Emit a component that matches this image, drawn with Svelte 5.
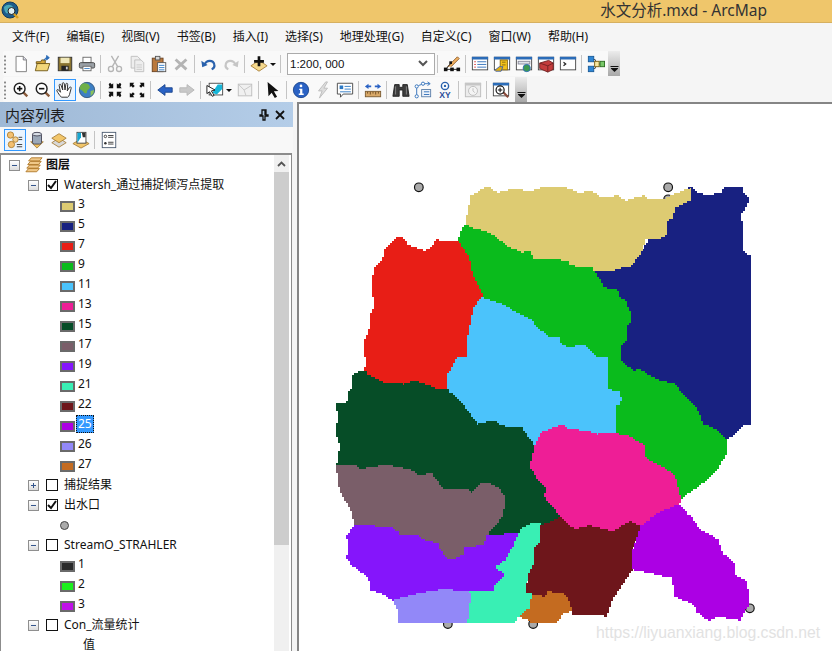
<script>
  const menus = ['文件(F)', '编辑(E)', '视图(V)', '书签(B)', '插入(I)', '选择(S)', '地理处理(G)', '自定义(C)', '窗口(W)', '帮助(H)'];

  const win = (inner) => `<rect x="1.5" y="2.5" width="17" height="14" fill="#fff" stroke="#444"/><rect x="1" y="2" width="18" height="3" fill="#2b6cb8"/>${inner}`;
  const mag = (sign) => `<path d="M12 12l5 5" stroke="#8a5a3a" stroke-width="2.6"/><circle cx="8.5" cy="8.5" r="6" fill="#fff" stroke="#222" stroke-width="1.6"/><path d="${sign}" stroke="#111" stroke-width="1.8"/>`;
  const diamond = (y, fill) => `<path d="M10 ${y}l8 5-8 5-8-5z" fill="${fill}" stroke="#a8803c"/>`;

  const icons = {
    new: '<path d="M4.5 1.5h8l3.5 3.5v13.5H4.5z" fill="#fff" stroke="#777"/><path d="M12.5 1.5v4h3.5" fill="#dde" stroke="#777"/>',
    open: '<path d="M2.5 7.5h5l1-2h4v4h-10z" fill="#d8a93c" stroke="#6b5314"/><path d="M1.5 17.5l2-8h14l-2.500 8z" fill="#f3d77a" stroke="#6b5314"/><path d="M11 6c1-3 3-3 5-3M14 0.500l3 2.500-3 2.500z" fill="#2b6cb8" stroke="#2b6cb8"/>',
    save: '<rect x="2.500" y="2.500" width="15" height="15" fill="#8a7430" stroke="#333"/><rect x="5" y="3" width="10" height="6" fill="#efe7b8"/><rect x="6" y="12" width="8" height="5.500" fill="#222"/><rect x="11" y="13" width="2" height="3" fill="#ccc"/>',
    print: '<rect x="5.500" y="2.500" width="9" height="6" fill="#fff" stroke="#666"/><rect x="1.500" y="8.500" width="17" height="6" rx="1.500" fill="#9aa0a6" stroke="#444"/><rect x="5.500" y="12.500" width="9" height="5" fill="#fff" stroke="#666"/><path d="M7 15h6" stroke="#3b7fc4"/>',
    cut: '<g fill="none" stroke="#b5b5b5" stroke-width="1.500"><path d="M6 1l7 12M14 1L7 13"/><circle cx="5.500" cy="15.500" r="2.800"/><circle cx="14.500" cy="15.500" r="2.800"/></g>',
    copy: '<g fill="#eee" stroke="#bdbdbd"><path d="M3.500 1.500h7l3 3v10h-10z"/><path d="M7.500 5.500h7l3 3v10h-10z"/></g><path d="M9.500 11h6M9.500 13.500h6M9.500 16h6" stroke="#c8c8c8"/>',
    paste: '<rect x="2.500" y="3.500" width="12" height="15" fill="#b9783c" stroke="#6a4322"/><rect x="6" y="1.500" width="5" height="4" fill="#d8d8d8" stroke="#555"/><rect x="8.500" y="8.500" width="9" height="10" fill="#fff" stroke="#555"/><path d="M10 11.500h6M10 14h6M10 16.500h6" stroke="#2b78c4"/>',
    del: '<path d="M4 5l12 11M16 5L4 16" stroke="#b4b4b4" stroke-width="3.200"/>',
    undo: '<path d="M5 11c2-6 10-6 11 0 .4 2-1 4-3 5" fill="none" stroke="#2a62ad" stroke-width="2.400"/><path d="M1.500 6.500l1 7 6-2.500z" fill="#2a62ad"/>',
    redo: '<path d="M15 11c-2-6-10-6-11 0-.4 2 1 4 3 5" fill="none" stroke="#c6c6c6" stroke-width="2.400"/><path d="M18.500 6.500l-1 7-6-2.500z" fill="#c6c6c6"/>',
    add: '<path d="M10 6l9 6-9 6-9-6z" fill="#f4d88c" stroke="#a8803c"/><path d="M10 1.500v11M4.500 7h11" stroke="#111" stroke-width="3"/>',
    editor: '<path d="M5 15L16 4l2 2-9 9" fill="#f0b060" stroke="#8a5a2a" transform="translate(0 -2)"/><path d="M3 16h14M3 16L9 9" stroke="#222"/><g fill="#111"><rect x="1" y="14" width="4" height="4"/><rect x="8" y="14" width="4" height="4"/><rect x="15" y="14" width="4" height="4"/><rect x="7" y="7" width="3" height="3"/></g>',
    toc: win('<path d="M3.500 7.500h2M3.500 10.500h2M3.500 13.500h2" stroke="#d44"/><path d="M7 7.500h10M7 10.500h10M7 13.500h10" stroke="#2b6cb8"/>'),
    catalog: win('<rect x="8" y="5.500" width="8" height="11" fill="#f2c21a" stroke="#8a6a10"/><path d="M2 17l5-4h4l-2 5H3z" fill="#e3b010" stroke="#3d5fa8"/><path d="M10 8h4M10 11h4" stroke="#8a6a10"/>'),
    search: win('<rect x="3.500" y="7" width="13" height="3" fill="#dfe4ea" stroke="#889"/><circle cx="13" cy="14.500" r="4" fill="#3d9a50" stroke="#2b6cb8"/>'),
    toolbox: win('<path d="M3 9l10-3 5 3v7l-6 3-9-4z" fill="#c43c3c" stroke="#702020"/><path d="M3 9l9 3 6-3M12 12v7" stroke="#702020" fill="none"/>'),
    python: win('<path d="M5 8l2.500 2L5 12" fill="none" stroke="#222" stroke-width="1.300"/>'),
    model: '<g stroke="#444" fill="none"><path d="M5 5h4l2 5M5 15h4l2-5"/><path d="M13 10h3"/></g><rect x="1.500" y="1.500" width="6" height="6" fill="#2e86d6" stroke="#1a5a98"/><rect x="1.500" y="12.500" width="6" height="6" fill="#2e86d6" stroke="#1a5a98"/><rect x="8.500" y="7" width="5" height="6" fill="#f8e8a0" stroke="#7a5a10"/><rect x="14.500" y="7" width="5" height="6" fill="#78c868" stroke="#2a6a20"/>',
    zoomin: mag('M5.500 8.500h6M8.500 5.500v6'),
    zoomout: mag('M5.500 8.500h6'),
    pan: '<path d="M6 18c-2-2-4-5-5-7-.5-1.500 1-2 2-1l2 2.500L3.500 5c-.3-1.500 1.500-2 2-.5L7.500 10 7 3c0-1.500 2-1.500 2.200 0L10 10l1-6.500c.3-1.500 2-1.200 2 .3L12.500 11l2.500-4c1-1 2.300 0 1.800 1.300L15 15c-.5 1.500-1 2.500-2 3z" fill="#fff" stroke="#333" stroke-width="1.100"/>',
    globe: '<circle cx="10" cy="10" r="8.500" fill="#3d7fc4" stroke="#33577d"/><path d="M5 3c4-1 7 0 8 3s-3 3-3 6-3 2-4 0-4-2-4-4 1-4 3-5z" fill="#6fb048"/><path d="M14 11l4-1-1 4-3 3z" fill="#8bc25a"/>',
    fixin: '<path d="M3 3.500l1.500-1.500 2 2L8 2.500V8H2.500L4 6.500zM17 3.500L15.500 2l-2 2L12 2.500V8h5.500L16 6.500zM3 16.500L4.500 18l2-2L8 17.500V12H2.500L4 13.500zM17 16.500L15.500 18l-2-2-1.500 1.500V12h5.500L16 13.500z" fill="#111"/>',
    fixout: '<path d="M2 2h5L5.500 3.500 7.500 5.500 5.500 7.500 3.500 5.500 2 7zM18 2h-5l1.500 1.500-2 2 2 2 2-2L18 7zM2 18h5l-1.500-1.500 2-2-2-2-2 2L2 13zM18 18h-5l1.500-1.500-2-2 2-2 2 2L18 13z" fill="#111"/>',
    back: '<path d="M2 10l8-6v3.500h8v5h-8V16z" fill="#2a62c4" stroke="#1c468c"/>',
    fwd: '<path d="M18 10l-8-6v3.500H2v5h8V16z" fill="#c8c8c8" stroke="#b8b8b8"/>',
    select: '<rect x="3.500" y="2.500" width="15" height="13" fill="#fff" stroke="#444"/><path d="M7 13l6-9h5v5l-6 6z" fill="#17b6d8"/><path d="M1 5l9 5-4 1 3 5-2 1-3-5-3 2z" fill="#fff" stroke="#111"/>',
    clear: '<rect x="2.500" y="3.500" width="15" height="13" fill="#f0f0f0" stroke="#bdbdbd"/><path d="M3 4l6 6 2 6M9 10l8-5" stroke="#c4c4c4" fill="none"/>',
    arrow: '<path d="M4 1l12 10-5 .5 3.500 6-2.500 1.500-3.500-6L5 17z" fill="#111"/>',
    info: '<circle cx="10" cy="10" r="8.500" fill="#2a62c4" stroke="#1c468c"/><circle cx="10" cy="5.500" r="1.500" fill="#fff"/><path d="M8 8.500h3.500V14H13v1.500H7.500V14H9V10H8z" fill="#fff"/>',
    bolt: '<path d="M13 1L5 11h4l-3 8 9-11h-4l4-7z" fill="#ddd" stroke="#bbb"/>',
    popup: '<path d="M1.500 2.500h17v12H8l-3 3.500v-3.500H1.500z" fill="#fff" stroke="#444"/><rect x="4" y="5" width="4" height="4" fill="#2b78c4"/><path d="M9.500 6h7M9.500 9h7M4.500 12h12" stroke="#2b78c4"/>',
    measure: '<rect x="1.500" y="11.500" width="17" height="6" fill="#d8a868" stroke="#7a5a30"/><path d="M4 12v2M7 12v3M10 12v2M13 12v3M16 12v2" stroke="#6a4a20"/><path d="M1 6l4-3v2h3v2H5v2zM19 6l-4-3v2h-3v2h3v2z" fill="#2a62c4"/>',
    find: '<path d="M3 4h5v3h4V4h5l2 13h-7V10H8v7H1z" fill="#3d3d3d" stroke="#222"/><path d="M4 6v9M16 6v9" stroke="#888"/>',
    route: '<g fill="#fff" stroke="#2b6cb8"><circle cx="3" cy="6" r="1.800"/><circle cx="3" cy="17" r="1.800"/><circle cx="10" cy="3" r="1.800"/></g><path d="M3 8v7M5 5l3-1" stroke="#2b6cb8"/><rect x="8.500" y="9.500" width="10" height="8" fill="#eef3fa" stroke="#5a7ea8"/><path d="M11 12h6M11 15h6" stroke="#2b6cb8"/><path d="M12 3h5M15 1l3 2-3 2" stroke="#2b6cb8" fill="none"/>',
    xy: '<circle cx="10" cy="5.500" r="4" fill="#fff" stroke="#2a62ad" stroke-width="1.600"/><circle cx="10" cy="5.500" r="1.300" fill="#2a62ad"/><text x="10" y="19" text-anchor="middle" font-family="Liberation Sans" font-weight="700" font-size="9.500" fill="#2a4f9a">XY</text>',
    time: '<rect x="1.500" y="2.500" width="17" height="15" fill="#ececec" stroke="#bbb"/><rect x="1" y="2" width="18" height="3" fill="#c6c6c6"/><circle cx="10" cy="11" r="5" fill="#f4f4f4" stroke="#bbb"/><path d="M10 8v3l2 2" stroke="#bbb" fill="none"/>',
    viewer: win('<path d="M12 12l6 6" stroke="#8a4a3a" stroke-width="2.400"/><circle cx="9" cy="10" r="4.500" fill="#fff" stroke="#111" stroke-width="1.300"/><path d="M6.500 10h5M9 7.500v5" stroke="#111" stroke-width="1.200"/>'),
    order: '<circle cx="5" cy="4.500" r="3.500" fill="#f4c070" stroke="#b08030"/><circle cx="6" cy="15" r="3.500" fill="#f4c070" stroke="#b08030"/><circle cx="10.500" cy="9.500" r="3" fill="#f4d090" stroke="#b08030"/><path d="M14 7h4M14 9.500h4M12 15h6M12 17.500h6" stroke="#333"/>',
    source: '<path d="M3 12h14l-7 7z" fill="#f0c060" stroke="#a8803c"/><rect x="5" y="2.500" width="10" height="12" rx="2" fill="#9ba8b8" stroke="#445"/><ellipse cx="10" cy="3.500" rx="5" ry="2" fill="#d8dee6" stroke="#445"/>',
    visible: diamond(8, '#d8d8d8') + diamond(3, '#f2c66a'),
    selection: '<path d="M10 9l9 5-9 5-9-5z" fill="#f2c66a" stroke="#a8803c"/><rect x="5.500" y="1.500" width="10" height="12" fill="#fff" stroke="#444"/><path d="M6 13l4-6V2H6z" fill="#17a6d0"/><path d="M11 2h4v5h-3z" fill="#333"/>',
    options: '<rect x="2.500" y="1.500" width="15" height="17" fill="#fff" stroke="#4a5a70"/><circle cx="6" cy="6" r="1.400" fill="#fff" stroke="#333"/><circle cx="6" cy="13.500" r="1.400" fill="#333"/><path d="M9 5h6M9 7h6M9 12.500h6M9 14.500h6" stroke="#333"/>',
    layers: '<path d="M4 5.500L7 2h12l-3 3.500zM3 9.500L6 6h12l-3 3.500zM2 13.500L5 10h12l-3 3.500zM1 17.500L4 14h12l-3 3.500z" fill="#f0c888" stroke="#b07828"/>',
    app: '<circle cx="9" cy="9" r="8" fill="#1d5c8c" stroke="#123a5c"/><path d="M3 6c3-3 7-3 9 0s-3 4-5 6-4-3-4-6z" fill="#4aa8b8"/><circle cx="10.500" cy="10" r="3.500" fill="#dff0f4" stroke="#222"/><path d="M13 13l4 4" stroke="#d8a020" stroke-width="2.400"/>'
  };

  // x = dropdown arrow, | = separator
  const bar1 = ['new', 'open', 'save', 'print', '|', 'cut', 'copy', 'paste', 'del', '|', 'undo', 'redo', '|', 'add', 'x', '|', 'combo', '|', 'editor', '|', 'toc', 'catalog', 'search', 'toolbox', 'python', '|', 'model'];
  const bar2 = ['zoomin', 'zoomout', 'pan', 'globe', '|', 'fixin', 'fixout', '|', 'back', 'fwd', '|', 'select', 'x', 'clear', '|', 'arrow', '|', 'info', 'bolt', 'popup', '|', 'measure', '|', 'find', 'route', 'xy', '|', 'time', '|', 'viewer'];
  const tabs = ['order', 'source', 'visible', 'selection', '|', 'options'];

  const classes = [
    ['3', '#ddcb72'], ['5', '#182181'], ['7', '#e81e16'], ['9', '#0abb1c'], ['11', '#4bc3fb'],
    ['13', '#ee1e96'], ['15', '#064d27'], ['17', '#7a5e69'], ['19', '#8515fb'], ['21', '#39efb4'],
    ['22', '#6e161b'], ['25', '#ac00e4'], ['26', '#9288f8'], ['27', '#c46b20']
  ];
  const streams = [['1', '#2a2a2a'], ['2', '#1cf01c'], ['3', '#c010e8']];

  const rows = [
    { type: 'root', label: '图层' },
    { type: 'layer', label: 'Watersh_通过捕捉倾泻点提取', open: true, checked: true },
    ...classes.map(([label, color]) => ({ type: 'cls', label, color, active: label === '25' })),
    { type: 'layer', label: '捕捉结果', open: false, checked: false },
    { type: 'layer', label: '出水口', open: true, checked: true },
    { type: 'symbol' },
    { type: 'layer', label: 'StreamO_STRAHLER', open: true, checked: false },
    ...streams.map(([label, color]) => ({ type: 'cls', label, color })),
    { type: 'layer', label: 'Con_流量统计', open: true, checked: false },
    { type: 'value', label: '值' }
  ];

  // the map is a raster: turn traced outlines into 2px stairs (6 units at this scale)
  function stairs(points) {
    const pts = points.split(' ').map((p) => p.split(',').map(Number));
    const snap = (v) => Math.round(v / 6) * 6;
    const out = [];
    pts.forEach(([ax, ay], i) => {
      const [bx, by] = pts[(i + 1) % pts.length];
      const n = Math.max(1, Math.ceil(Math.max(Math.abs(bx - ax), Math.abs(by - ay)) / 6));
      let py = snap(ay);
      for (let k = 1; k <= n; k++) {
        const x = snap(ax + ((bx - ax) * k) / n);
        const y = snap(ay + ((by - ay) * k) / n);
        out.push(`${x},${py}`, `${x},${y}`);
        py = y;
      }
    });
    return out.join(' ');
  }

  // traced off the map at 3x, drawn back to front
  const regions = [
    ['#182181', '1075,52 1095,70 1130,78 1175,70 1180,55 1235,52 1240,75 1255,90 1228,140 1238,185 1238,245 1257,265 1257,762 1240,762 1210,790 1185,815 1160,785 1115,765 1105,730 1070,690 1000,640 800,560 760,300 780,295 900,285 1030,110'],
    ['#ddcb72', '405,165 412,125 422,80 470,52 495,73 540,60 600,65 640,52 690,52 740,70 780,68 810,85 860,80 880,95 940,78 945,90 1000,88 1050,68 1080,55 1078,90 1030,110 1028,145 1010,150 1005,190 990,205 945,205 932,245 900,285 850,298 820,302 780,295 720,290 710,275 640,268 605,268 600,245 570,250 530,232 495,205 470,190 430,180'],
    ['#4bc3fb', '455,378 520,400 560,420 610,450 625,470 660,495 690,498 695,520 720,530 740,520 770,520 805,555 835,555 835,655 870,660 875,690 855,715 855,793 830,790 800,795 770,785 700,780 700,765 685,770 635,787 615,830 590,805 570,775 535,775 505,765 485,753 440,765 400,715 365,680 348,658 348,620 380,557 410,555 410,500 420,450 430,405'],
    ['#0abb1c', '400,168 430,180 470,190 495,205 530,232 570,250 600,245 605,268 640,268 710,275 720,290 780,295 800,325 825,362 860,358 862,385 885,400 902,442 890,470 890,505 868,530 868,575 905,605 925,600 970,630 1030,645 1055,680 1070,690 1105,730 1115,765 1160,785 1185,815 1185,850 1160,900 1130,930 1060,975 1050,990 1030,920 980,885 945,870 940,830 890,800 855,793 855,715 875,690 870,660 835,655 835,555 805,555 770,520 740,520 720,530 695,520 690,498 660,495 625,470 610,450 560,420 520,400 455,378 440,350 425,320 415,270 380,215'],
    ['#e81e16', '195,205 210,205 235,230 280,245 300,235 315,210 335,218 380,215 415,270 425,320 440,350 455,378 430,405 420,450 410,500 410,555 380,557 348,620 348,658 315,660 250,635 215,645 155,640 115,620 102,605 108,575 100,515 122,470 120,435 132,405 125,330 135,290 155,275 165,235'],
    ['#064d27', '70,610 102,607 115,620 155,640 215,645 250,635 315,660 348,658 365,680 400,715 440,765 485,753 505,765 535,775 570,775 590,805 612,835 600,880 620,920 650,955 645,975 695,1040 630,1070 570,1080 565,1090 470,1110 400,1000 20,885 20,880 30,830 18,785 25,730 18,700 50,700 55,665 65,660 68,615'],
    ['#7a5e69', '20,885 70,890 85,900 160,888 235,900 260,920 300,912 335,960 410,960 420,970 450,940 470,940 500,955 520,985 518,1040 490,1065 470,1100 460,1128 400,1135 400,1155 370,1168 345,1168 325,1140 323,1120 290,1118 260,1100 205,1098 190,1078 150,1075 120,1070 75,1065 60,1010 40,980 22,930'],
    ['#8515fb', '75,1065 120,1070 190,1078 205,1098 260,1100 290,1118 323,1120 325,1140 345,1168 370,1168 400,1155 400,1135 460,1128 470,1100 565,1090 550,1130 525,1170 500,1190 525,1210 495,1240 488,1268 385,1265 340,1260 285,1268 190,1290 160,1270 120,1255 115,1215 70,1185 50,1155 55,1130 50,1100'],
    ['#39efb4', '575,1075 605,1062 630,1065 632,1110 610,1140 612,1175 595,1210 585,1265 605,1275 600,1315 570,1335 545,1358 410,1358 420,1270 385,1265 488,1268 495,1240 525,1210 500,1190 525,1170 550,1130 565,1090'],
    ['#9288f8', '190,1290 285,1268 340,1260 420,1270 410,1358 207,1358 205,1320'],
    ['#c46b20', '605,1275 655,1260 700,1268 715,1285 725,1320 695,1330 680,1358 620,1358 568,1338 600,1315'],
    ['#6e161b', '630,1070 695,1040 735,1075 780,1062 850,1080 900,1050 935,1065 905,1140 908,1195 875,1240 845,1290 827,1335 730,1332 715,1280 700,1268 655,1260 640,1275 588,1265 595,1210 612,1175 610,1140 632,1110'],
    ['#ee1e96', '635,787 685,770 700,765 705,780 770,785 800,795 855,793 890,800 940,830 945,870 980,885 1030,920 1050,990 1045,1005 985,1030 935,1065 900,1050 850,1080 780,1062 735,1075 695,1040 640,975 650,955 620,920 600,880 612,835'],
    ['#ac00e4', '1045,1005 1070,1035 1105,1080 1160,1110 1175,1155 1210,1190 1210,1215 1248,1238 1255,1300 1228,1348 1160,1335 1140,1350 1100,1320 1090,1300 1035,1275 1025,1220 908,1195 908,1140 935,1065 985,1030']
  ].map(([fill, points]) => [fill, stairs(points)]);
  const outlets = [[265, 52], [1013, 52], [1013, 88], [1258, 1315], [352, 1362], [608, 1362]];
</script>

{#snippet icon(name)}
  <svg class="ico" viewBox="0 0 20 20" width="18" height="18">{@html icons[name]}</svg>
{/snippet}

{#snippet toolbar(items, active)}
  {#each items as item}
    {#if item === '|'}
      <span class="sep"></span>
    {:else if item === 'x'}
      <span class="drop"></span>
    {:else if item === 'combo'}
      <div class="combo">
        <span>1:200, 000</span>
        <svg width="10" height="8" viewBox="0 0 10 8"><path d="M1 1l4 4 4-4" fill="none" stroke="#555" stroke-width="2"/></svg>
      </div>
    {:else}
      <span class="btn" class:on={item === active}>{@render icon(item)}</span>
    {/if}
  {/each}
{/snippet}

<div class="window">
  <div class="titlebar">
    <span class="app-icon">{@render icon('app')}</span>
    <span class="title">水文分析.mxd - ArcMap</span>
  </div>

  <div class="menubar">
    {#each menus as m}
      <span class="menu">{m}</span>
    {/each}
  </div>

  <div class="toolbar one">
    <span class="grip"></span>
    {@render toolbar(bar1, '')}
    <span class="more"></span>
  </div>
  <div class="toolbar two">
    <span class="grip"></span>
    {@render toolbar(bar2, 'pan')}
    <span class="more"></span>
  </div>

  <div class="main">
    <div class="toc">
      <div class="toc-head">
        <span class="toc-title">内容列表</span>
        <svg class="pin" width="10" height="12" viewBox="0 0 10 12"><path d="M3 1h4v5h2v1H6v4H4V7H1V6h2zM6 1v5" fill="none" stroke="#111" stroke-width="1.300"/></svg>
        <svg class="close" width="10" height="10" viewBox="0 0 10 10"><path d="M1 1l8 8M9 1L1 9" stroke="#111" stroke-width="1.800"/></svg>
      </div>
      <div class="toc-tabs">
        {@render toolbar(tabs, 'order')}
      </div>
      <div class="tree">
        <div class="rows">
          {#each rows as row}
            <div class="row {row.type}">
              {#if row.type === 'root'}
                <span class="exp minus"></span>
                <span class="layers">{@render icon('layers')}</span>
                <b>{row.label}</b>
              {:else if row.type === 'layer'}
                <span class="exp" class:minus={row.open} class:plus={!row.open}></span>
                <span class="check">
                  {#if row.checked}
                    <svg width="10" height="10" viewBox="0 0 10 10"><path d="M1 5l3 3 5-7" fill="none" stroke="#111" stroke-width="2"/></svg>
                  {/if}
                </span>
                <span>{row.label}</span>
              {:else if row.type === 'cls'}
                <span class="swatch" style="background: {row.color}"></span>
                <span class="cls-label" class:active={row.active}>{row.label}</span>
              {:else if row.type === 'symbol'}
                <span class="dot"></span>
              {:else}
                <span>{row.label}</span>
              {/if}
            </div>
          {/each}
        </div>
        <div class="scroll">
          <div class="scroll-up">
            <svg width="9" height="6" viewBox="0 0 9 6"><path d="M1 5l3.500-3.500L8 5" fill="none" stroke="#555" stroke-width="1.800"/></svg>
          </div>
          <div class="scroll-thumb"></div>
        </div>
      </div>
    </div>

    <div class="map">
      <svg class="map-svg" width="534" height="547" shape-rendering="crispEdges">
        <g transform="translate(31.500 66) scale(0.33333)">
          {#each outlets as [x, y]}
            <circle cx={x} cy={y} r="13" fill="#aaa" stroke="#111" stroke-width="3.500" shape-rendering="auto"/>
          {/each}
          {#each regions as [fill, points]}
            <polygon {fill} {points} stroke={fill} stroke-width="4"/>
          {/each}
        </g>
      </svg>
      <span class="mark">https://liyuanxiang.blog.csdn.net</span>
    </div>
  </div>
</div>

<style>
  :global(body) {
    background: #f5f5f5;
  }

  .window {
    width: 832px;
    height: 651px;
    overflow: hidden;
    display: flex;
    flex-direction: column;
    background: #f5f5f5;
    font-family: "Noto Sans", "Noto Sans CJK SC", sans-serif;
    font-size: 12px;
    color: #111;
  }

  .titlebar {
    height: 22px;
    flex: none;
    display: flex;
    align-items: center;
    justify-content: space-between;
    padding: 0 65px 0 1px;
    background: #efc66b;
    border-bottom: 1px solid #d6b060;
  }

  .app-icon {
    display: flex;
    width: 20px;
    height: 20px;
  }

  .app-icon .ico {
    width: 20px;
    height: 20px;
  }

  .title {
    font-size: 15.500px;
    line-height: 20px;
    margin-top: -2px;
    color: #333;
  }

  .menubar {
    height: 28px;
    flex: none;
    display: flex;
    align-items: center;
    padding-left: 3.500px;
  }

  .menu {
    padding: 0 8.500px;
    line-height: 16px;
    white-space: nowrap;
  }

  .toolbar {
    flex: none;
    height: 25px;
    display: flex;
    align-items: center;
    margin-left: 3px;
    background: #f9f9f9;
    border-radius: 2px;
  }

  .toolbar.one {
    width: 617px;
    margin-bottom: 1px;
  }

  .toolbar.two {
    width: 524px;
  }

  .grip {
    width: 6px;
    height: 18px;
    margin-right: 1px;
    flex: none;
    background: radial-gradient(circle at 2px 1.500px, #8a8a8a 1px, transparent 1.200px) 0 0 / 4px 4px repeat-y;
  }

  .btn {
    flex: none;
    width: 22px;
    height: 22px;
    display: flex;
    align-items: center;
    justify-content: center;
    box-sizing: border-box;
  }

  .btn.on {
    border: 1px solid #3399ff;
    background: #eaf4fe;
  }

  .ico {
    display: block;
    flex: none;
  }

  .sep {
    flex: none;
    width: 6px;
    height: 18px;
    background: linear-gradient(#c4c4c4, #c4c4c4) 2px 0 / 1px 100% no-repeat;
  }

  .drop {
    flex: none;
    width: 8px;
    height: 22px;
    position: relative;
  }

  .drop::after {
    content: '';
    position: absolute;
    left: 0;
    top: 10px;
    border: 3px solid transparent;
    border-top: 3px solid #111;
  }

  .combo {
    flex: none;
    width: 148px;
    height: 22px;
    box-sizing: border-box;
    display: flex;
    align-items: center;
    justify-content: space-between;
    padding: 0 6px 0 2px;
    margin: 0 0 0 3px;
    background: #fff;
    border: 1px solid #ababab;
    font-family: "Liberation Sans", Arial, sans-serif;
    font-size: 11.500px;
  }

  .more {
    flex: none;
    width: 12px;
    height: 25px;
    margin-left: auto;
    background: linear-gradient(#ececec, #a8a8a8);
    position: relative;
  }

  .more::after {
    content: '';
    position: absolute;
    left: 2px;
    top: 15px;
    width: 7px;
    height: 1px;
    border-top: 1px solid #111;
    border-bottom: 4px solid #111;
    border-left: 1px solid transparent;
    border-right: 1px solid transparent;
    clip-path: polygon(0 0, 100% 0, 100% 30%, 50% 100%, 0 30%);
  }

  .main {
    flex: 1;
    min-height: 0;
    display: flex;
  }

  .toc {
    width: 293px;
    flex: none;
    display: flex;
    flex-direction: column;
    background: #f4f4f4;
  }

  .toc-head {
    height: 25px;
    flex: none;
    display: flex;
    align-items: center;
    padding: 0 4px 0 5px;
    background: linear-gradient(90deg, #9fb9d6, #b4cde8);
  }

  .toc-title {
    font-size: 15px;
    flex: 1;
    color: #1c1c1c;
  }

  .pin {
    margin-right: 6px;
  }

  .close {
    margin-right: 4px;
  }

  .toc-tabs {
    height: 26px;
    flex: none;
    display: flex;
    align-items: center;
    padding-left: 4px;
    background: #f8f8f8;
  }

  .tree {
    flex: 1;
    min-height: 0;
    display: flex;
    width: 292px;
    box-sizing: border-box;
    background: #fff;
    border: 1px solid #8c8c8c;
    border-top-width: 2px;
    border-bottom: none;
    padding-right: 2px;
  }

  .rows {
    flex: 1;
    min-width: 0;
  }

  .row {
    height: 20px;
    display: flex;
    align-items: center;
    white-space: nowrap;
    line-height: 16px;
  }

  .row.root {
    padding-left: 8px;
  }

  .row.layer {
    padding-left: 27px;
  }

  .row.cls,
  .row.symbol {
    padding-left: 59px;
  }

  .row.value {
    padding-left: 82px;
    line-height: 12px;
  }

  .exp {
    flex: none;
    width: 9px;
    height: 9px;
    border: 1px solid #8f8f8f;
    background:
      linear-gradient(#33558c, #33558c) center / 5px 1px no-repeat,
      linear-gradient(#fff, #dcdcdc);
    margin-right: 7px;
  }

  .exp.plus {
    background:
      linear-gradient(#33558c, #33558c) center / 5px 1px no-repeat,
      linear-gradient(#33558c, #33558c) center / 1px 5px no-repeat,
      linear-gradient(#fff, #dcdcdc);
  }

  .layers {
    display: flex;
    width: 17px;
    margin: 0 4px 0 -2px;
  }

  .row.root b {
    font-weight: 700;
  }

  .check {
    flex: none;
    width: 10px;
    height: 10px;
    display: flex;
    align-items: center;
    justify-content: center;
    border: 1px solid #111;
    margin-right: 6px;
  }

  .swatch {
    flex: none;
    width: 11px;
    height: 7px;
    border: 2px solid #6a6a6a;
    margin-top: 2px;
  }

  .cls-label {
    margin-left: 1px;
    padding: 0 1px;
    margin-top: -2px;
    border: 1px solid transparent;
  }

  .cls-label.active {
    background: #3399ff;
    color: #fff;
    border: 1px dotted #111;
  }

  .dot {
    width: 7px;
    height: 7px;
    margin-left: 0;
    border-radius: 50%;
    background: #aaa;
    border: 1px solid #444;
  }

  .scroll {
    flex: none;
    width: 15px;
    display: flex;
    flex-direction: column;
    background: #f0f0f0;
  }

  .scroll-up {
    height: 17px;
    flex: none;
    display: flex;
    align-items: center;
    justify-content: center;
  }

  .scroll-thumb {
    height: 373px;
    flex: none;
    background: #cdcdcd;
  }

  .map {
    flex: 1;
    min-width: 0;
    margin-left: 4px;
    background: #fff;
    border-left: 2px solid #858585;
    border-top: 2px solid #858585;
    position: relative;
    overflow: hidden;
  }

  .map-svg {
    display: block;
  }

  .mark {
    position: absolute;
    left: 297px;
    top: 520px;
    font-family: "Liberation Sans", Arial, sans-serif;
    font-size: 15.750px;
    color: #e2e2e2;
    white-space: nowrap;
  }
</style>
